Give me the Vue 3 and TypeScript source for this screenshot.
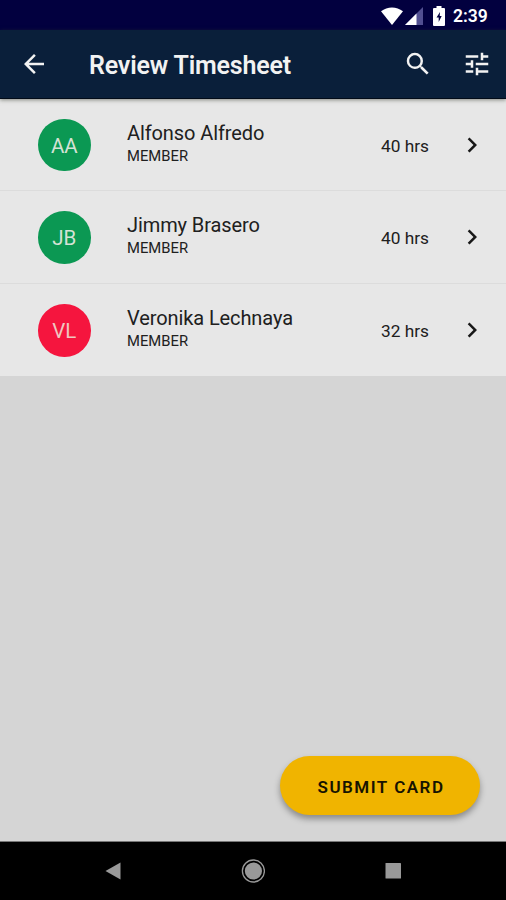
<script setup lang="ts">
interface Member {
  initials: string
  name: string
  role: string
  hours: number
  tone: 'green' | 'red'
}

const members: Member[] = [
  { initials: 'AA', name: 'Alfonso Alfredo', role: 'MEMBER', hours: 40, tone: 'green' },
  { initials: 'JB', name: 'Jimmy Brasero', role: 'MEMBER', hours: 40, tone: 'green' },
  { initials: 'VL', name: 'Veronika Lechnaya', role: 'MEMBER', hours: 32, tone: 'red' },
]
</script>

<template>
  <div class="screen">
    <div class="status">
      <svg class="wifi" viewBox="0 0 22 18"><path d="M0 4.2C6.4-.9 15.6-.9 22 4.2L11 18z" fill="#fff" /></svg>
      <svg class="signal" viewBox="0 0 18 18">
        <path d="M0 18L18 0v18z" fill="#514f91" />
        <path d="M0 18L11.500 6.500V18z" fill="#fff" />
      </svg>
      <svg class="battery" viewBox="0 0 12 20">
        <path d="M3.500 0h5v2H11a1 1 0 0 1 1 1v16a1 1 0 0 1-1 1H1a1 1 0 0 1-1-1V3a1 1 0 0 1 1-1h2.500z" fill="#fff" />
        <path d="M7 6L3.500 11.500h2.200v4.500L8.700 10H6.700z" fill="#02003f" />
      </svg>
      <span class="clock">2:39</span>
    </div>

    <header class="bar">
      <svg class="icon" viewBox="0 0 24 24"><path d="M20 11H7.830l5.590-5.590L12 4l-8 8 8 8 1.410-1.410L7.830 13H20z" /></svg>
      <h1 class="title">Review Timesheet</h1>
      <svg class="icon search" viewBox="0 0 24 24"><path d="M15.500 14h-.79l-.28-.27A6.471 6.471 0 0 0 16 9.500 6.500 6.500 0 1 0 9.500 16c1.610 0 3.090-.59 4.230-1.570l.27.28v.79l5 4.990L20.490 19zm-6 0C7.010 14 5 11.990 5 9.500S7.010 5 9.500 5 14 7.010 14 9.500 11.990 14 9.500 14z" /></svg>
      <svg class="icon" viewBox="0 0 24 24"><path d="M3 17v2h6v-2zM3 5v2h10V5zm10 16v-2h8v-2h-8v-2h-2v6zM7 9v2H3v2h4v2h2V9zm14 4v-2H11v2zm-6-4h2V7h4V5h-4V3h-2z" /></svg>
    </header>

    <main class="content">
      <ul class="list">
        <li v-for="m in members" :key="m.initials" class="row">
          <span class="avatar" :class="m.tone">{{ m.initials }}</span>
          <div class="person">
            <span class="name">{{ m.name }}</span>
            <span class="role">{{ m.role }}</span>
          </div>
          <span class="hours">{{ m.hours }} hrs</span>
          <svg class="chevron" viewBox="0 0 24 24"><path d="M10 6L8.590 7.410 13.170 12l-4.580 4.590L10 18l6-6z" /></svg>
        </li>
      </ul>
      <button class="submit" type="button">SUBMIT CARD</button>
    </main>

    <nav class="nav">
      <svg viewBox="0 0 24 24"><path d="M4.500 12L19.500 3.500v17z" fill="#999" /></svg>
      <svg viewBox="0 0 24 24">
        <circle cx="12.400" cy="12" r="11" fill="none" stroke="#999" stroke-width="1.300" />
        <circle cx="12.400" cy="12" r="8.600" fill="#999" />
      </svg>
      <svg viewBox="0 0 24 24"><rect x="4.500" y="4" width="15.500" height="15.500" rx=".6" fill="#999" /></svg>
    </nav>
  </div>
</template>

<style>
body {
  margin: 0;
}
</style>

<style scoped>
.screen {
  display: flex;
  flex-direction: column;
  width: 506px;
  height: 900px;
  overflow: hidden;
  background: #d5d5d5;
  font-family: Roboto, "Liberation Sans", sans-serif;
  color: #202020;
}
.status {
  display: flex;
  align-items: center;
  justify-content: flex-end;
  box-sizing: border-box;
  height: 30px;
  padding: 1px 18px 0 0;
  background: #02003f;
}
.wifi {
  width: 22px;
  height: 18px;
}
.signal {
  width: 18px;
  height: 18px;
  margin-left: 2px;
}
.battery {
  width: 12px;
  height: 20px;
  margin-left: 10px;
}
.clock {
  width: 35px;
  margin-left: 8px;
  color: #fff;
  font-size: 17.500px;
  font-weight: 600;
  line-height: 30px;
  white-space: nowrap;
}
.bar {
  position: relative;
  z-index: 1;
  display: flex;
  align-items: center;
  box-sizing: border-box;
  height: 69px;
  padding: 0 14px 0 19px;
  background: #0a1f3a;
  border-bottom: 1px solid #020b18;
  box-shadow: 0 1px 4px rgba(50, 55, 40, 0.55);
}
.icon {
  flex: none;
  width: 30px;
  height: 30px;
  fill: #f2f2f2;
}
.title {
  flex: 1;
  margin: 4px 0 0 40px;
  color: #f2f2f2;
  font-size: 25px;
  font-weight: 600;
  line-height: 32px;
  letter-spacing: -0.180px;
}
.search {
  margin-right: 29px;
}
.content {
  display: flex;
  flex: 1;
  flex-direction: column;
  justify-content: space-between;
  box-sizing: border-box;
  border-bottom: 1px solid #777;
}
.list {
  margin: 0;
  padding: 0;
  list-style: none;
}
.row {
  display: flex;
  align-items: center;
  box-sizing: border-box;
  height: 92px;
  padding: 0 19px 0 38px;
  background: #e7e7e7;
  border-bottom: 1px solid #dcdcdc;
}
.row:nth-child(2) {
  height: 93px;
}
.row:last-child {
  border-bottom: 0;
}
.avatar {
  flex: none;
  width: 52.500px;
  height: 52.500px;
  margin-top: 1px;
  border-radius: 50%;
  color: #d5e2d5;
  font-size: 20.500px;
  line-height: 54px;
  text-align: center;
}
.green {
  background: #0b9853;
}
.red {
  background: #f5153e;
  color: #efc7c0;
}
.person {
  display: flex;
  flex: 1;
  flex-direction: column;
  margin: 0 0 2px 36.500px;
}
.name {
  font-size: 20px;
  line-height: 25px;
  letter-spacing: -0.100px;
}
.role {
  font-size: 14.800px;
  line-height: 21px;
}
.hours {
  margin: 2px 28px 0 0;
  font-size: 17.300px;
  line-height: 22px;
}
.chevron {
  flex: none;
  width: 30px;
  height: 30px;
  fill: #181818;
}
.submit {
  align-self: flex-end;
  width: 200px;
  height: 59px;
  margin: 0 26px 26px 0;
  padding: 2px 0 0 2px;
  border: 0;
  border-radius: 30px;
  background: #f0b400;
  box-shadow: 0 4px 6px rgba(0, 0, 0, 0.35);
  color: #171300;
  font-family: inherit;
  font-size: 17px;
  font-weight: 600;
  letter-spacing: 1.500px;
}
.nav {
  display: flex;
  align-items: center;
  justify-content: space-between;
  box-sizing: border-box;
  height: 58px;
  padding: 0 101px;
  background: #000;
}
.nav svg {
  width: 24px;
  height: 24px;
}
</style>
